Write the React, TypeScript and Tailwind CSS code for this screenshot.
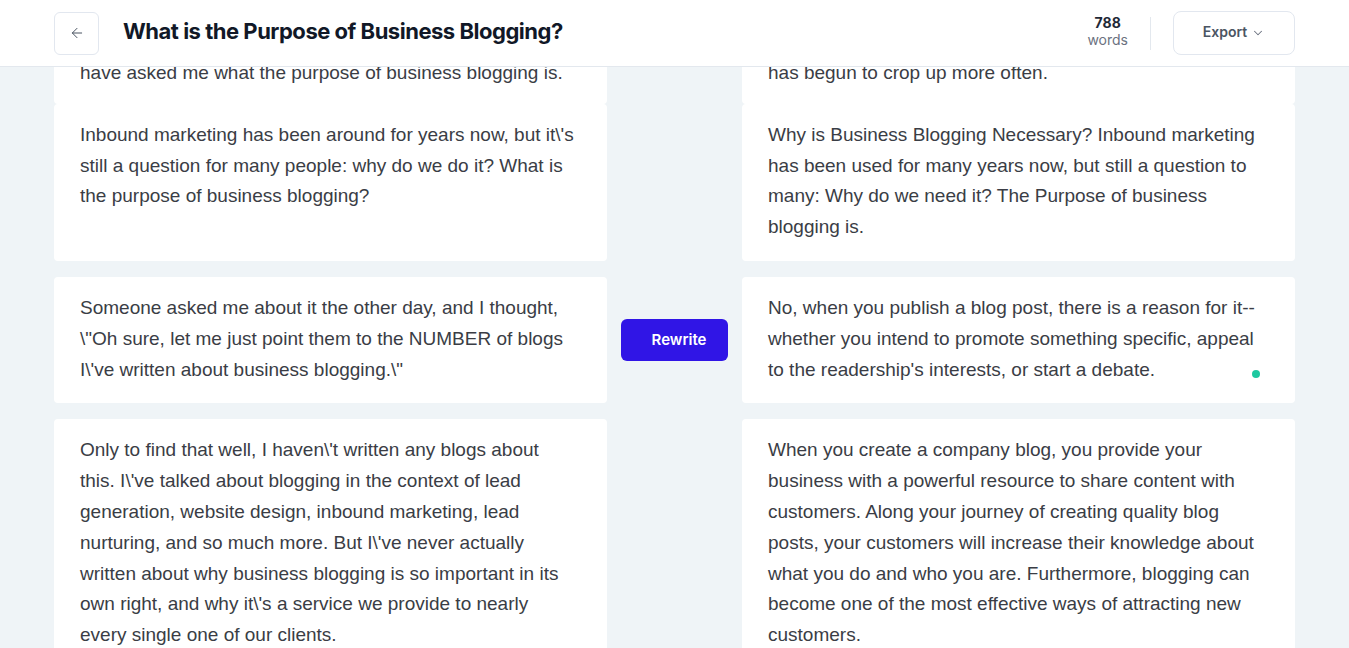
import React from "react";
import { ArrowLeft, ChevronDown } from "lucide-react";

const ROWS = [
  {
    left: "Inbound marketing has been around for years now, but it\\'s still a question for many people: why do we do it? What is the purpose of business blogging?",
    right: "Why is Business Blogging Necessary? Inbound marketing has been used for many years now, but still a question to many: Why do we need it? The Purpose of business blogging is.",
  },
  {
    left: "Someone asked me about it the other day, and I thought, \\\"Oh sure, let me just point them to the NUMBER of blogs I\\'ve written about business blogging.\\\"",
    right: "No, when you publish a blog post, there is a reason for it--whether you intend to promote something specific, appeal to the readership's interests, or start a debate.",
    active: true,
  },
  {
    left: "Only to find that well, I haven\\'t written any blogs about this. I\\'ve talked about blogging in the context of lead generation, website design, inbound marketing, lead nurturing, and so much more. But I\\'ve never actually written about why business blogging is so important in its own right, and why it\\'s a service we provide to nearly every single one of our clients.",
    right: "When you create a company blog, you provide your business with a powerful resource to share content with customers. Along your journey of creating quality blog posts, your customers will increase their knowledge about what you do and who you are. Furthermore, blogging can become one of the most effective ways of attracting new customers.",
  },
];

const cardBase = "bg-white rounded-[4px] pl-[26px] pr-[30px] pt-[16px] text-[19px] leading-[30.8px] text-[#3a3d45] font-['Liberation_Sans',Arial,sans-serif]";
const cardText = cardBase + " pb-[18px]";
const cardTop = cardBase + " pb-[15px]";

export default function App() {
  return (
    <div className="h-[648px] flex flex-col overflow-hidden bg-[#eff4f7]">
      {/* ── Header ── */}
      <header className="h-[67px] shrink-0 bg-white border-b border-[#e3e8ee] flex items-center justify-between px-[54px] font-['Inter',sans-serif]">
        <div className="flex items-center gap-6">
          <button className="w-[45px] h-[43px] flex items-center justify-center rounded-md border border-[#e2e7ef] text-[#4b5563]">
            <ArrowLeft className="w-4 h-4" strokeWidth={1.5} />
          </button>
          <h1 className="text-[22px] font-bold tracking-[-0.022em] text-[#111827] pb-[4px]">
            What is the Purpose of Business Blogging?
          </h1>
        </div>
        <div className="flex items-center">
          <div className="flex flex-col items-center leading-[17px] pb-[4px]">
            <span className="text-[14px] font-bold text-[#1f2937]">788</span>
            <span className="text-[14px] text-[#6b7280]">words</span>
          </div>
          <div className="w-px h-[33px] bg-[#e3e8ee] ml-[22px] mr-[22px]" />
          <button className="w-[122px] h-[44px] flex items-center justify-center gap-1 rounded-lg border border-[#e2e7ef] text-[14px] font-semibold text-[#4b5563] pb-[3px]">
            Export
            <ChevronDown className="w-[14px] h-[14px] text-[#6b7280] mt-[2px]" strokeWidth={1.75} />
          </button>
        </div>
      </header>

      {/* ── Paragraph pairs (scrolled) ── */}
      <main className="flex-1 overflow-hidden px-[54px]">
        <div className="-mt-[25px] flex flex-col">
          <div className="grid grid-cols-[553px_135px_553px]">
            <div className={cardTop}>have asked me what the purpose of business blogging is.</div>
            <div />
            <div className={cardTop}>has begun to crop up more often.</div>
          </div>
          <div className="flex flex-col gap-4">
            {ROWS.map((row, i) => (
              <div key={i} className="grid grid-cols-[553px_135px_553px]">
                <div className={cardText}>{row.left}</div>
                <div className="flex items-center justify-center">
                  {row.active && (
                    <button className="w-[107px] h-[42px] rounded-md bg-[#3015e6] text-white text-[15px] font-semibold font-['Inter',sans-serif] pl-[9px]">
                      Rewrite
                    </button>
                  )}
                </div>
                <div className={cardText + " relative"}>
                  {row.right}
                  {row.active && (
                    <span className="absolute right-[35px] bottom-[25px] w-2 h-2 rounded-full bg-[#1ec8a0]" />
                  )}
                </div>
              </div>
            ))}
          </div>
        </div>
      </main>
    </div>
  );
}
